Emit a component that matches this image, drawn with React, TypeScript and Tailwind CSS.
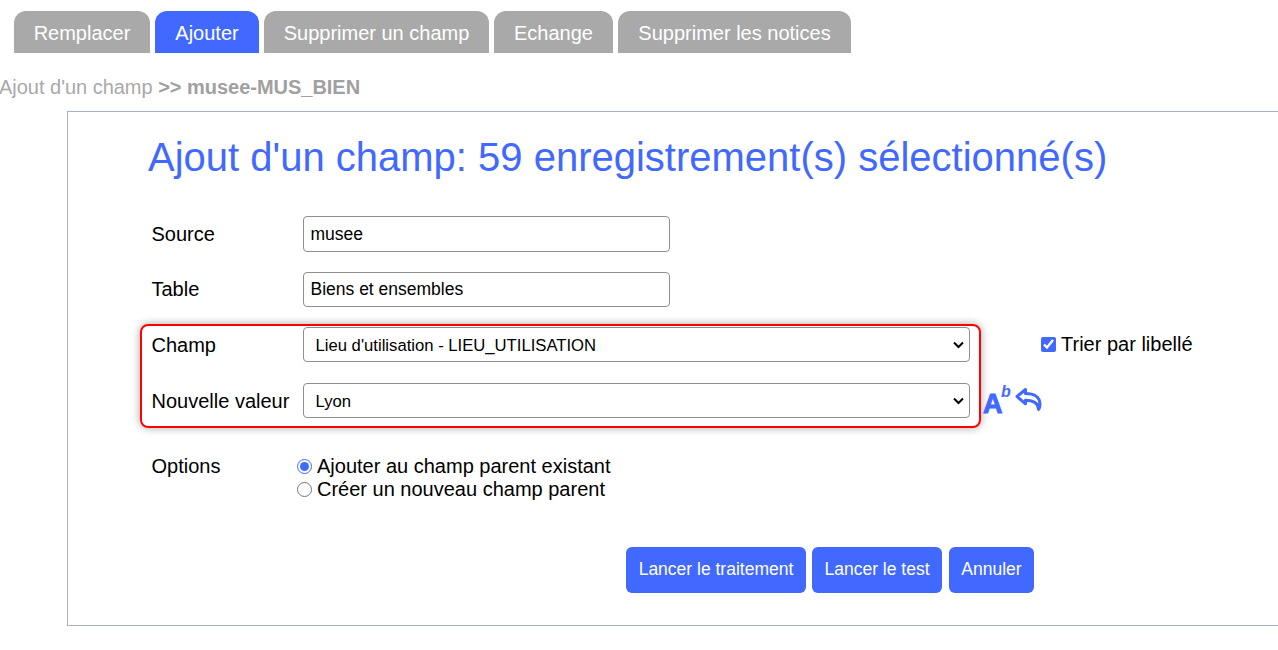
const TABS = [
  { label: 'Remplacer', w: 'w-[136px]' },
  { label: 'Ajouter', active: true, w: 'w-[104px]' },
  { label: 'Supprimer un champ', w: 'w-[225px]' },
  { label: 'Echange', w: 'w-[119px]' },
  { label: 'Supprimer les notices', w: 'w-[233px]' },
];

function ReplyIcon() {
  return (
    <svg className="mt-[2px]" width="27" height="24" viewBox="0 0 27 24" fill="none" stroke="#4169ff" strokeWidth="3" strokeLinejoin="round" strokeLinecap="round">
      <path d="M2 9.5 L10.5 2.5 V6.6 C18.5 6.6 25 9.6 25 17.5 C25 19.6 24.4 21.2 23.6 22.4 C23.4 17 19 13.4 10.5 13.2 V16.8 Z" />
    </svg>
  );
}

function Chevron() {
  return (
    <svg className="pointer-events-none absolute right-[6px] top-[14px]" width="11" height="8" viewBox="0 0 11 8" fill="none" stroke="#000" strokeWidth="2">
      <path d="M1 1.5 L5.5 6 L10 1.5" />
    </svg>
  );
}

function Select({ value }: { value: string }) {
  return (
    <div className="relative h-[35px] w-[667px]">
      <select defaultValue={value}
        className="h-[35px] w-full appearance-none rounded-[4px] border border-[#8f8f8f] bg-white pl-[11.5px] pt-[1px] text-[16.67px]">
        <option value={value}>{value}</option>
      </select>
      <Chevron />
    </div>
  );
}

export default function App() {
  return (
    <div className="h-[650px] w-[1278px] overflow-hidden bg-white font-['Liberation_Sans',Arial,sans-serif] text-[20px] text-black">
      <nav className="flex gap-[5px] pl-[14px] pt-[11px]">
        {TABS.map(t => (
          <div key={t.label}
            className={`flex h-[42px] items-center justify-center rounded-t-[12px] pt-[2px] text-white ${t.w} ${t.active ? 'bg-[#4169ff]' : 'bg-[#a9a9a9]'}`}>
            {t.label}
          </div>
        ))}
      </nav>

      <div className="-ml-[1px] mt-[22px] h-[24px] leading-[24px] tracking-[-0.02px] text-[#a9a9a9]">
        Ajout d'un champ <b className="text-[#a0a0a0]">&gt;&gt; musee-MUS_BIEN</b>
      </div>

      <main className="ml-[67px] mt-[12px] h-[515px] w-[1260px] border border-[#a9afc4] pl-[80px] pt-[20px]">
        <h1 className="h-[50px] text-[40px] leading-[50px] text-[#4169ff]">
          Ajout d'un champ: 59 enregistrement(s) sélectionné(s)
        </h1>

        <div className="mt-[34px] flex h-[36px] items-center pl-[3.5px]">
          <label className="w-[151.5px]">Source</label>
          <input readOnly value="musee"
            className="h-[36px] w-[367px] rounded-[4px] border border-[#8f8f8f] px-[6.5px] text-[17.5px]" />
        </div>
        <div className="mt-[20px] flex h-[35px] items-center pl-[3.5px]">
          <label className="-mt-[2px] w-[151.5px]">Table</label>
          <input readOnly value="Biens et ensembles"
            className="h-[35px] w-[367px] rounded-[4px] border border-[#8f8f8f] px-[6.5px] text-[17.5px]" />
        </div>

        <div className="relative -ml-[8px] mt-[17px] h-[104px] w-[841px] rounded-[8px] border-2 border-[#f00] pl-[9.5px] pt-[1px] shadow-[0_0_8px_rgba(0,0,0,0.35)]">
          <div className="flex h-[35px] items-center">
            <label className="w-[151.5px]">Champ</label>
            <Select value="Lieu d'utilisation - LIEU_UTILISATION" />
          </div>
          <div className="mt-[21px] flex h-[35px] items-center">
            <label className="w-[151.5px]">Nouvelle valeur</label>
            <Select value="Lyon" />
          </div>
          <label className="absolute left-[899px] top-[3px] flex items-center whitespace-nowrap">
            <input type="checkbox" readOnly checked className="mr-[5px] h-[15px] w-[15px] accent-[#4169ff]" />
            Trier par libellé
          </label>
          <div className="absolute left-[841px] top-[59px] flex items-start text-[#4169ff]">
            <span className="relative h-[30px] w-[32px]">
              <span className="absolute left-0 top-[4px] text-[27px] font-bold leading-[30px] [-webkit-text-stroke:1px_#4169ff]">A</span>
              <span className="absolute left-[18px] top-[-3px] text-[16px] font-bold italic leading-[20px]">b</span>
            </span>
            <ReplyIcon />
          </div>
        </div>

        <div className="mt-[27px] flex pl-[3.5px]">
          <div className="w-[145.5px] leading-[23px]">Options</div>
          <div className="leading-[23px]">
            {['Ajouter au champ parent existant', 'Créer un nouveau champ parent'].map((o, i) => (
              <label key={o} className="flex h-[23px] items-center">
                <input type="radio" name="opt" readOnly checked={i === 0} className="mr-[5px] h-[15px] w-[15px] accent-[#4169ff]" />
                {o}
              </label>
            ))}
          </div>
        </div>

        <div className="ml-[478px] mt-[46px] flex gap-[6px] text-[17.5px] text-white">
          <button className="h-[46px] w-[180px] rounded-[6px] bg-[#4169ff] pb-[2px]">Lancer le traitement</button>
          <button className="h-[46px] w-[130px] rounded-[6px] bg-[#4169ff] pb-[2px]">Lancer le test</button>
          <button className="ml-[1px] h-[46px] w-[85px] rounded-[6px] bg-[#4169ff] pb-[2px]">Annuler</button>
        </div>
      </main>
    </div>
  );
}
